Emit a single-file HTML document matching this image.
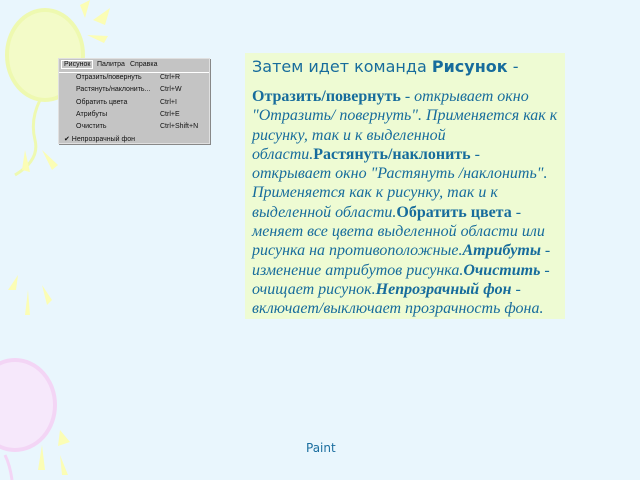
<!DOCTYPE html>
<html><head><meta charset="utf-8"><style>
body{margin:0;width:640px;height:480px;background:#e9f6fd;position:relative;overflow:hidden;font-family:"Liberation Sans",sans-serif}
svg.bg{position:absolute;left:0;top:0}
.menu{position:absolute;left:58px;top:58px;width:152px;height:86px;background:#c4c4c4;border:1px solid #e0e0e0;box-sizing:border-box;font-size:7px;color:#111;box-shadow:1px 1px 0 #888}
.mb{height:13px;border-bottom:1px solid #fff;position:relative}
.mb span{position:absolute;top:2px}
.it{position:absolute;left:17px}
.sc{position:absolute;left:101px}
.box{position:absolute;left:245px;top:53px;width:320px;height:266px;background:#eefbd3;color:#176c9c}
.t{position:absolute;left:7px;top:4px;font-family:"DejaVu Sans",sans-serif;font-size:16px}
.b{position:absolute;left:7px;font-family:"Liberation Serif",serif;font-size:16px;line-height:19.3px;font-style:italic;white-space:nowrap}
.b b{font-style:normal}
.b b i{font-style:italic}
.p{position:absolute;left:306px;top:441px;font-family:"DejaVu Sans",sans-serif;font-size:12px;color:#1b6e9f}
</style></head><body>
<svg class="bg" width="640" height="480">
<ellipse cx="45" cy="55" rx="38" ry="45" fill="#f3fbc8" stroke="#eef9b0" stroke-width="4"/>
<path d="M40 100 Q30 120 35 140 Q40 160 15 175" fill="none" stroke="#eef9b0" stroke-width="3"/>
<g fill="#fbfdb5">
<polygon points="80,5 90,0 85,18"/><polygon points="93,20 110,8 105,25"/><polygon points="87,35 108,36 104,43"/>
<polygon points="25,150 30,172 22,170"/><polygon points="42,150 58,165 52,170"/>
<polygon points="8,290 18,275 16,290"/><polygon points="28,290 30,315 25,315"/><polygon points="42,285 52,300 47,305"/>
<polygon points="60,430 70,442 58,446"/><polygon points="42,445 45,470 38,470"/><polygon points="60,455 68,475 62,475"/>
</g>
<ellipse cx="15" cy="405" rx="40" ry="45" fill="#f6e8fb" stroke="#f3d5f5" stroke-width="4"/>
<path d="M5 455 Q10 465 12 480" fill="none" stroke="#f3d5f5" stroke-width="3"/>
</svg>
<div class="menu">
<div class="mb"><span style="left:2px;padding:0 2px;border:1px solid #fff;top:1px">Рисунок</span><span style="left:38px">Палитра</span><span style="left:71px">Справка</span></div>
<div class="it" style="top:15px">Отразить/повернуть</div><div class="sc" style="top:15px">Ctrl+R</div>
<div class="it" style="top:27px">Растянуть/наклонить...</div><div class="sc" style="top:27px">Ctrl+W</div>
<div class="it" style="top:40px">Обратить цвета</div><div class="sc" style="top:40px">Ctrl+I</div>
<div class="it" style="top:52px">Атрибуты</div><div class="sc" style="top:52px">Ctrl+E</div>
<div class="it" style="top:64px">Очистить</div><div class="sc" style="top:64px">Ctrl+Shift+N</div>
<div class="it" style="top:76px;left:5px">✔ Непрозрачный фон</div>
</div>
<div class="box">
<div class="t">Затем идет команда <b>Рисунок</b> -</div>
<div class="b" style="top:34px"><b>Отразить/повернуть</b> - открывает окно<br>"Отразить/ повернуть". Применяется как к<br>рисунку, так и к выделенной<br>области.<b>Растянуть/наклонить</b> -<br>открывает окно "Растянуть /наклонить".<br>Применяется как к рисунку, так и к<br>выделенной области.<b>Обратить цвета</b> -<br>меняет все цвета выделенной области или<br>рисунка на противоположные.<b><i>Атрибуты</i></b> -<br>изменение атрибутов рисунка.<b><i>Очистить</i></b> -<br>очищает рисунок.<b><i>Непрозрачный фон</i></b> -<br>включает/выключает прозрачность фона.</div>
</div>
<div class="p">Paint</div>
</body></html>
